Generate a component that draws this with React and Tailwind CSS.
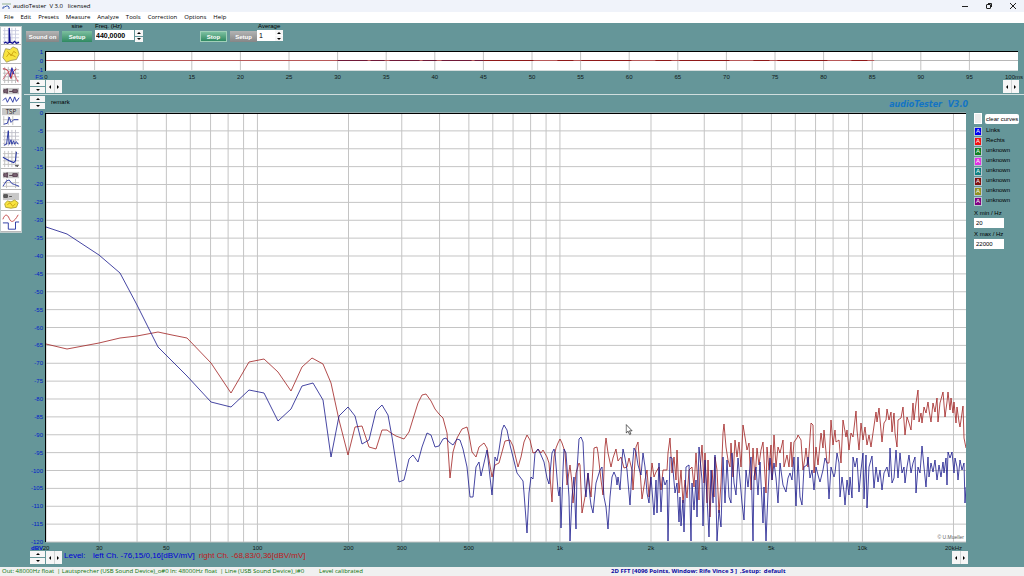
import React from 'react';

const MENU = ['File', 'Edit', 'Presets', 'Measure', 'Analyze', 'Tools', 'Correction', 'Options', 'Help'];

const CURVES = [
  { name: 'Links', box: 'bg-[#0000f0]' },
  { name: 'Rechts', box: 'bg-[#f01010]' },
  { name: 'unknown', box: 'bg-[#108020]' },
  { name: 'unknown', box: 'bg-[#e030e0]' },
  { name: 'unknown', box: 'bg-[#108080]' },
  { name: 'unknown', box: 'bg-[#801010]' },
  { name: 'unknown', box: 'bg-[#909020]' },
  { name: 'unknown', box: 'bg-[#800080]' },
];

const FREQS = [20, 30, 40, 50, 60, 70, 80, 90, 100, 200, 300, 400, 500, 600, 700, 800, 900, 1000,
  2000, 3000, 4000, 5000, 6000, 7000, 8000, 9000, 10000, 20000];

const FREQ_LABELS = {
  20: '20', 30: '30', 50: '50', 100: '100', 200: '200', 300: '300', 500: '500',
  1000: '1k', 2000: '2k', 3000: '3k', 5000: '5k', 10000: '10k', 20000: '20kHz',
};

const LEVELS = Array.from({ length: 25 }, (_, i) => i * -5);
const TIMES = Array.from({ length: 20 }, (_, i) => i * 5);

const LEFT_TRACE = `46,227 67,234 99,255 120,273 137,305 158,347 187,376 211,402 231,407 249,390 264,393 278,421
291,409 302,386 313,383 323,400 331,457 339,416 348,407 355,416 362,444 369,440 376,411 382,405 388,415 392,437
399,482 404,480 409,459 413,455 418,462 422,447 427,433 431,435 435,447 439,446 443,439 446,438 449,442 453,445
457,439 460,440 463,449 467,467 470,497 473,497 476,467 479,462 481,476 484,463 487,450 492,495 495,457 497,461
499,450 502,430 504,425 507,430 510,445 513,457 517,473 523,481 524,493 527,533 529,493 531,477 533,479 535,453
538,449 541,455 544,462 547,478 549,484 552,453 554,449 555,453 558,490 559,496 560,487 561,528 563,470 564,449
566,453 569,497 570,541 572,497 574,477 576,529 577,470 579,439 581,437 583,442 585,487 586,497 588,473 590,497
591,505 593,513 596,483 600,470 602,467 604,497 606,507 608,529 610,497 612,477 614,472 616,477 617,485 618,477
620,490 622,460 623,449 625,458 627,470 630,505 632,470 634,448 636,452 638,465 641,475 643,453 645,467 647,493
649,503 651,477 654,515 656,480 657,513 659,463 661,512 663,477 665,485 667,480 668,541 670,457 672,458 675,493
677,483 679,522 680,497 681,526 683,500 684,532 686,467 689,465 691,541 692,483 694,510 696,480 697,517 699,447
702,480 703,526 705,460 707,497 709,537 711,470 713,503 715,455 717,541 719,510 721,527 723,457 725,503 727,460
729,497 731,503 732,453 734,483 736,495 738,458 740,480 742,503 744,520 746,470 748,487 751,457 753,541 754,477
756,467 758,495 760,462 763,523 764,487 766,541 768,493 770,458 772,480 774,463 776,478 778,503 780,463 783,485
786,492 788,478 790,473 792,480 794,457 796,506 798,457 800,497 802,505 804,467 807,465 808,457 810,478 812,470
814,490 816,467 818,475 820,482 823,470 825,458 827,463 829,499 831,467 834,477 835,473 837,453 839,463 840,497
842,477 844,492 845,505 847,480 849,495 850,477 852,498 853,457 855,467 857,458 859,492 861,470 863,453 864,499
866,455 867,508 869,467 872,456 874,488 876,467 878,482 880,470 882,490 884,473 887,467 889,477 890,448 892,483
894,478 896,450 898,478 900,453 902,473 904,467 905,483 907,467 909,455 911,473 913,463 915,457 916,493 918,467
920,473 922,446 924,467 926,487 928,457 929,477 931,463 933,472 935,460 937,480 939,465 941,477 943,462 944,473
946,458 947,485 948,452 950,458 952,452 954,473 955,458 957,467 958,480 960,460 962,470 964,463 965,503 966,487`;

const RIGHT_TRACE = `46,344 67,349 99,343 120,338 137,336 158,332 172,335 187,338 211,363 231,393 249,362 264,359
278,372 291,391 302,367 312,358 323,364 331,383 339,420 348,455 355,427 362,426 369,447 376,449 382,430 387,430
391,433 396,436 404,439 409,432 413,419 418,403 422,395 426,394 431,401 435,409 439,414 443,418 447,433 450,478
453,452 457,438 462,429 467,427 469,435 472,452 476,457 479,447 484,443 487,448 492,477 495,465 499,463 502,452
505,441 510,440 513,446 518,467 521,457 524,442 527,435 530,440 533,453 536,452 538,449 541,453 543,450 547,457
549,463 552,502 554,457 556,448 558,443 560,439 562,443 565,452 567,485 570,465 572,483 573,503 576,473 579,463
580,465 582,513 585,497 588,473 591,497 593,467 594,448 597,447 598,453 601,480 603,495 605,447 606,438 608,453
611,467 613,458 616,449 618,461 621,457 624,468 627,467 629,458 632,470 633,490 636,447 638,442 640,470 642,499
645,480 647,470 649,497 652,463 654,477 656,472 659,467 661,490 663,470 667,470 668,453 670,438 672,473 674,457
676,480 677,450 679,493 681,470 683,503 685,480 687,498 689,470 692,467 694,487 696,453 697,470 699,500 700,470
702,445 704,483 705,453 707,503 708,460 710,517 712,470 714,497 715,457 717,470 719,513 721,483 723,433 724,424
726,447 728,460 730,467 731,443 733,477 735,440 737,457 739,442 741,467 743,425 745,437 747,450 749,443 751,490
753,448 755,480 757,448 759,465 761,450 763,442 766,493 767,447 769,470 771,445 772,480 774,435 776,467 778,447
780,453 783,440 784,467 787,455 789,467 791,442 792,467 794,442 797,438 798,435 801,440 803,470 805,457 806,448
808,467 811,423 813,425 814,473 816,447 818,465 821,433 823,448 824,430 827,463 829,463 831,420 833,445 835,430
836,442 839,440 841,463 843,420 846,437 847,430 849,450 851,433 853,437 856,411 857,430 859,450 861,423 863,440
865,427 867,445 869,435 871,447 873,433 876,412 877,422 879,408 882,442 884,423 886,420 887,409 889,420 891,412
892,432 894,413 895,433 897,447 898,420 901,418 903,407 905,435 907,417 909,423 911,430 913,403 914,420 916,403
918,390 919,422 921,413 922,423 924,407 926,413 928,402 929,410 931,422 933,403 935,412 937,398 938,422 940,403
943,392 945,417 947,402 948,392 950,410 951,398 953,413 954,402 956,423 957,407 959,422 960,427 962,413 963,406
964,438 966,448`;

const freqPos = (f) => `${(Math.log10(f / 20) / Math.log10(22000 / 20)) * 100}%`;
const levelPos = (db) => `${(db / -120) * 100}%`;

const GRID = 'M3 1V19M7 1V19M11 1V19M15 1V19M1 4H19M1 8H19M1 12H19M1 16H19';
const CLOUD = 'M2 8L4 3L9 4L12 1L17 3L19 9L16 15L10 16L5 18L1 13Z';

const TOOLS = [
  { name: 'Spectrum', art: (
    <>
      <path d={GRID} stroke="#c8cce0" />
      <path d="M2 18L4 17L6 18L8 17V1L9 17L12 18L14 16L16 18L19 17" stroke="#101090" strokeWidth="1.4" />
    </>
  ) },
  { name: '3D spectrum', art: (
    <>
      <path d={CLOUD} fill="#f8e440" stroke="#a09860" />
      <path d="M5 12L8 8L10 11L13 6L16 8M6 6L9 9L15 12" stroke="#c8a010" />
    </>
  ) },
  { name: 'Frequency response', art: (
    <>
      <path d={GRID} stroke="#b8b8b8" />
      <path d="M1 3C5 3 7 5 8 9L10 14L12 7L16 3" stroke="#c02030" />
      <path d="M1 15L5 9L9 5L13 8L18 18" stroke="#d06070" />
      <path d="M9 12L11 2L13 9" stroke="#3030b0" strokeWidth="1.4" />
    </>
  ) },
  { name: 'Speaker', art: (
    <>
      <rect x="1" y="1" width="18" height="7" fill="#c8c8c8" stroke="none" />
      <path d="M2 3H4L6 2V7L4 6H2ZM8 5H12M12 3H17V6H12Z" fill="#806878" stroke="#503848" />
      <path d="M1 15L4 12L6 17L9 11L12 17L14 11L16 16L19 12" stroke="#2030a0" />
    </>
  ) },
  { name: 'TSP', art: (
    <>
      <rect x="0" y="0" width="20" height="8" fill="#c8c8c8" stroke="none" />
      <text x="10" y="7" textAnchor="middle" fontSize="7" fill="#202020" stroke="none">TSP</text>
      <path d="M2 9V19M1 13H19M7 9V19M12 9V19" stroke="#c0c0c0" />
      <path d="M2 18L6 17L8 10L10 16L13 13L18 13" stroke="#2030a0" />
    </>
  ) },
  { name: 'Impulse', art: (
    <>
      <path d={GRID} stroke="#c0c0c8" />
      <path d="M2 18L5 17L7 2L8 17L10 12L11 17L13 13L14 17L16 14L18 17" stroke="#2030a0" />
    </>
  ) },
  { name: 'Impedance', art: (
    <>
      <path d={GRID} stroke="#c0c0c0" />
      <path d="M1 8L8 12L13 14L15 12L16 2" stroke="#2030a0" strokeWidth="1.2" />
      <path d="M14 17H19L17 19Z" fill="#303030" stroke="none" />
    </>
  ) },
  { name: 'Sweep', art: (
    <>
      <rect x="1" y="1" width="18" height="7" fill="#c8c8c8" stroke="none" />
      <path d="M2 3H4L6 2V7L4 6H2ZM8 5H12M12 3H17V6H12Z" fill="#806878" stroke="#503848" />
      <path d="M1 13H19M1 17H19M5 9V19M15 9V19" stroke="#c0c0c0" />
      <path d="M1 17L5 11L8 10L11 14L14 15L19 17" stroke="#2030a0" />
    </>
  ) },
  { name: 'Waterfall', art: (
    <>
      <rect x="1" y="1" width="18" height="8" fill="#c8c8c8" stroke="none" />
      <path d="M2 3H6V6H2ZM8 5H11" fill="#606060" stroke="#484848" />
      <path d="M3 13L6 10L10 11L14 9L18 12L16 17L10 18L4 17Z" fill="#f8e440" stroke="#b0a030" />
      <path d="M6 14L9 12L12 16L15 13" stroke="#c8a010" />
    </>
  ) },
  { name: 'Generator', art: (
    <>
      <path d="M1 7C3 1 6 1 8 6S13 11 18 2" stroke="#c04040" />
      <path d="M1 11H7V18H15V10H19" stroke="#2030a0" />
    </>
  ) },
];

function SpinV({ label, className = '' }) {
  return (
    <div className={`flex flex-col gap-px ${className}`}>
      <button aria-label={`${label} up`} className="flex-1 bg-[#f6f6f6] flex items-center justify-center">
        <svg width="4" height="2" viewBox="0 0 4 2"><path d="M0 2L2 0L4 2Z" /></svg>
      </button>
      <button aria-label={`${label} down`} className="flex-1 bg-[#f6f6f6] flex items-center justify-center">
        <svg width="4" height="2" viewBox="0 0 4 2"><path d="M0 0L2 2L4 0Z" /></svg>
      </button>
    </div>
  );
}

function SpinH({ label }) {
  return (
    <div className="flex w-4 h-[13px]">
      <button aria-label={`${label} left`} className="flex-1 bg-[#f6f6f6] border-r border-[#d0d4d4] flex items-center justify-center">
        <svg width="2" height="4" viewBox="0 0 2 4"><path d="M2 0L0 2L2 4Z" /></svg>
      </button>
      <button aria-label={`${label} right`} className="flex-1 bg-[#f6f6f6] flex items-center justify-center">
        <svg width="2" height="4" viewBox="0 0 2 4"><path d="M0 0L2 2L0 4Z" /></svg>
      </button>
    </div>
  );
}

const GREEN = 'bg-linear-to-b from-[#7cc0a0] to-[#2e8a62]';
const GRAY = 'bg-linear-to-b from-[#b4b4b4] to-[#868686]';

function ToolButton({ color, className = '', children }) {
  return (
    <button className={`h-[11px] font-bold text-white text-[6px] leading-[10px] whitespace-nowrap ${color} ${className}`}>
      {children}
    </button>
  );
}

function TitleBar() {
  return (
    <header className="h-3 bg-[#f0f3fa] flex items-center justify-between pl-[2px] pr-2 text-[6px] text-black">
      <div className="flex items-center gap-[2px]">
        <svg width="9" height="8" viewBox="0 0 9 8" fill="none">
          <path d="M0 2H9" stroke="#90b090" />
          <path d="M1 7V5H3L4 4H6L7 5V7" stroke="#4060b0" />
        </svg>
        <h1 className="whitespace-pre">audioTester  V 3.0   licensed</h1>
      </div>
      <div className="flex items-center gap-[18px]">
        <button aria-label="Minimize"><svg width="6" height="6" viewBox="0 0 6 6"><path d="M0 3.5H6" stroke="#202020" /></svg></button>
        <button aria-label="Restore">
          <svg width="6" height="6" viewBox="0 0 6 6" fill="none" stroke="#202020">
            <rect x="0.5" y="1.5" width="4" height="4" rx="0.5" />
            <path d="M2 0.5H5.5V4" />
          </svg>
        </button>
        <button aria-label="Close"><svg width="6" height="6" viewBox="0 0 6 6"><path d="M0 0L6 6M6 0L0 6" stroke="#202020" /></svg></button>
      </div>
    </header>
  );
}

function Scope() {
  return (
    <svg className="block w-full h-5 overflow-visible text-[6px]">
      <rect width="100%" height="20" fill="#fff" />
      {TIMES.map((t) => (
        <g key={t}>
          <line x1={`${t}%`} x2={`${t}%`} y1="1" y2="20" stroke="#c4c4c4" />
          <text x={`${t}%`} y="28" textAnchor="middle" fill="#101818">{t}</text>
        </g>
      ))}
      <text x="100%" y="28" dx="5" textAnchor="end" fill="#101818">100ms</text>
      <line x1="0" x2="100%" y1="9.5" y2="9.5" stroke="#b8b8b8" />
      <line x1="0" x2="85.2%" y1="9.5" y2="9.5" stroke="#b85858" />
      <line x1="30%" x2="45%" y1="9.5" y2="9.5" stroke="#701838" strokeDasharray="30 3 14 5" />
      <line x1="45%" x2="85.2%" y1="9.5" y2="9.5" stroke="#901818" strokeDasharray="50 24 16 8" />
      <line x1="0" x2="100%" y1="0.5" y2="0.5" stroke="#000" />
      <line x1="-0.5" x2="-0.5" y1="0" y2="20" stroke="#000" />
      <line x1="0" x2="100%" y1="19.5" y2="19.5" stroke="#d4dcdc" />
      <g fill="#0020c8" textAnchor="end">
        <text x="-3" y="3">1</text>
        <text x="-3" y="12">0</text>
        <text x="-3" y="21">-1</text>
        <text x="-3" y="28">FS</text>
      </g>
    </svg>
  );
}

function Spectrum() {
  return (
    <div className="flex-1 flex min-w-0">
      <svg className="block w-full h-full min-h-40 overflow-visible text-[6px]">
        <rect width="100%" height="100%" fill="#fff" />
        {FREQS.map((f) => (
          <g key={f}>
            <line x1={freqPos(f)} x2={freqPos(f)} y1="0" y2="100%" stroke="#c4c4c4" />
            {FREQ_LABELS[f] && (
              <text x={freqPos(f)} y="100%" dy="8" textAnchor="middle" fill="#101818">{FREQ_LABELS[f]}</text>
            )}
          </g>
        ))}
        {LEVELS.map((db) => (
          <g key={db}>
            <line x1="0" x2="100%" y1={levelPos(db)} y2={levelPos(db)} stroke="#c4c4c4" />
            <text x="-3" y={levelPos(db)} dy="2" textAnchor="end" fill="#0020c8">{db}</text>
          </g>
        ))}
        <text x="-3" y="100%" dy="8" textAnchor="end" fontWeight="bold" fill="#0010d0">dBV</text>
        <svg width="100%" height="100%" viewBox="46 113 920 429" preserveAspectRatio="none" fill="none">
          <polyline points={RIGHT_TRACE} stroke="#a02020" strokeWidth="0.8" />
          <polyline points={LEFT_TRACE} stroke="#18188c" strokeWidth="0.8" />
        </svg>
        <line x1="0" x2="100%" y1="0.5" y2="0.5" stroke="#000" />
        <line x1="-0.5" x2="-0.5" y1="0" y2="100%" stroke="#000" />
        <text x="100%" y="100%" dx="-2" dy="-3" textAnchor="end" fill="#606060" fontSize="5">© U.Mueller</text>
        <svg x="63%" y="72.5%" width="8" height="12" viewBox="0 0 8 12">
          <path d="M0.5 0.5V9L2.5 7.2L4 10.5L5.3 9.9L3.9 6.8H6.5Z" fill="#fff" stroke="#303030" strokeWidth="0.8" />
        </svg>
      </svg>
    </div>
  );
}

function CurvePanel() {
  return (
    <aside className="w-[58px] pl-2 text-[6px] leading-[8px] text-black">
      <div className="flex items-center gap-[3px] mb-[2px]">
        <button aria-label="Toggle curves" className="w-2 h-[11px] bg-[#ececec] border border-white" />
        <button className="h-[10px] px-px bg-white rounded-[2px] whitespace-nowrap">clear curves</button>
      </div>
      <ul>
        {CURVES.map((c, i) => (
          <li key={i} className="flex h-[10px] gap-1">
            <button
              aria-label={`Curve ${i + 1}`}
              className={`w-2 h-[9px] mt-px border border-[#b8c8d0] text-white leading-[7px] ${c.box}`}
            >
              A
            </button>
            <span>{c.name}</span>
          </li>
        ))}
      </ul>
      <label className="block mt-[3px]" htmlFor="xmin">X min / Hz</label>
      <input id="xmin" defaultValue="20" className="block w-[30px] h-[10px] mt-px px-[2px] bg-white leading-[10px]" />
      <label className="block mt-[2px]" htmlFor="xmax">X max / Hz</label>
      <input id="xmax" defaultValue="22000" className="block w-[30px] h-[10px] mt-px px-[2px] bg-white leading-[10px]" />
    </aside>
  );
}

export default function App() {
  return (
    <div className="min-h-screen flex flex-col bg-[#659699] overflow-hidden font-['Open_Sans',sans-serif]">
      <TitleBar />
      <nav className="h-[11px] bg-white flex items-center gap-[7px] px-1 text-[6px] text-black">
        {MENU.map((m) => <button key={m}>{m}</button>)}
      </nav>

      <div className="flex-1 flex">
        <div className="w-6 pt-[3px]">
          <div className="w-[22px] bg-white border border-[#c0cccc] flex flex-col gap-px">
            {TOOLS.map((t, i) => (
              <button
                key={t.name}
                aria-label={t.name}
                className={`flex justify-center items-center border-b border-[#b8b8b8] ${i < 2 ? 'h-[18px]' : 'h-5'}`}
              >
                <svg width="18" height="18" viewBox="0 0 20 20" fill="none">{t.art}</svg>
              </button>
            ))}
          </div>
        </div>

        <main className="flex-1 min-w-0 flex flex-col font-['Liberation_Sans',sans-serif]">
          <div className="h-7 flex items-start pl-[2px] text-[6px] leading-[7px]">
            <div className="flex gap-[3px]">
              <ToolButton color={GRAY} className="w-[33px] mt-2">Sound on</ToolButton>
              <div className="flex flex-col items-center">
                <span className="h-2">sine</span>
                <ToolButton color={GREEN} className="w-[30px]">Setup</ToolButton>
              </div>
              <div>
                <label htmlFor="freq" className="block h-[7px]">Freq. (Hz)</label>
                <div className="flex gap-px">
                  <input id="freq" defaultValue="440,0000" className="w-[39px] h-[10px] px-px bg-white font-bold text-[7px]" />
                  <SpinV label="Frequency" className="w-2 h-3" />
                </div>
              </div>
            </div>
            <div className="flex ml-[57px] gap-[3px]">
              <ToolButton color={GREEN} className="w-[27px] mt-2 border border-[#a0d0b8] leading-[8px]">Stop</ToolButton>
              <div className="flex">
                <ToolButton color={GRAY} className="w-[27px] mt-2">Setup</ToolButton>
                <div>
                  <label htmlFor="avg" className="block h-[7px] pl-px">Average</label>
                  <div className="flex bg-white">
                    <input id="avg" defaultValue="1" className="w-[18px] h-[11px] px-[2px] text-[7px]" />
                    <SpinV label="Average" className="w-2 h-[11px]" />
                  </div>
                </div>
              </div>
            </div>
          </div>

          <div className="pl-[22px] pr-[6px]"><Scope /></div>

          <div className="mt-[9px] h-[14px] flex justify-between pl-[6px] pr-[5px]">
            <div className="flex gap-px">
              <SpinV label="Amplitude" className="w-[15px] h-[13px]" />
              <SpinH label="Time" />
            </div>
            <SpinH label="Time end" />
          </div>

          <div className="h-[19px] border-t border-[#d0dede] flex items-start justify-between pt-px pl-[6px] pr-14">
            <div className="flex items-center gap-[6px]">
              <SpinV label="Level top" className="w-[15px] h-[13px]" />
              <span className="text-[6px]">remark</span>
            </div>
            <span className="font-['DejaVu_Sans',sans-serif] font-bold italic text-[8px] leading-[18px] text-[#1474c4] whitespace-pre">audioTester  V3.0</span>
          </div>

          <div className="flex-1 flex pl-[22px]">
            <Spectrum />
            <CurvePanel />
          </div>

          <div className="mt-[9px] h-4 flex justify-between pl-[6px] pr-14">
            <div className="flex gap-px">
              <SpinV label="Level bottom" className="w-[15px] h-[13px]" />
              <SpinH label="Frequency start" />
              <div className="flex pl-px text-[8px] leading-[10px] whitespace-nowrap text-[#0000d8]">
                <span className="w-[29px]">Level:</span>
                <span className="mr-[4px]">left Ch. -76,15/0,16[dBV/mV]</span>
                <span className="text-[#c01820]">right Ch. -68,83/0,36[dBV/mV]</span>
              </div>
            </div>
            <SpinH label="Frequency end" />
          </div>
        </main>
      </div>

      <footer className="h-[9px] bg-[#f0f0f0] flex items-center pl-[2px] text-[6px] leading-[9px] whitespace-pre text-[#087008]">
        <span className="w-[55px]">Out: 48000Hz float</span>
        <span className="w-[113px]">| Lautsprecher (USB Sound Device)_o#0</span>
        <span className="w-[50px]">In: 48000Hz float</span>
        <span className="w-[99px]">| Line (USB Sound Device)_i#0</span>
        <span className="flex-1">Level calibrated</span>
        <span className="w-[413px] font-bold text-[#0808a0]">2D FFT [4096 Points, Window: Rife Vince 3 ]  ,Setup:  default</span>
      </footer>
    </div>
  );
}
